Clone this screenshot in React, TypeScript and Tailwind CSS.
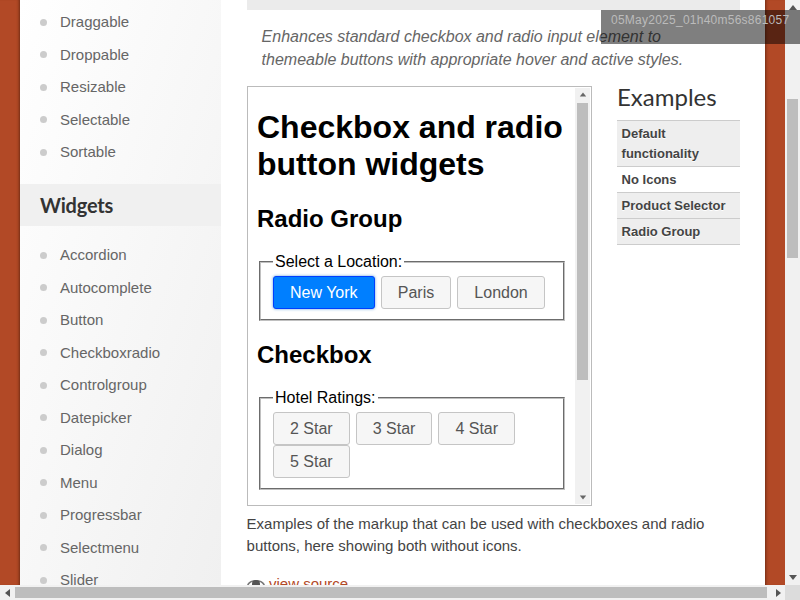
const interactions = ["Draggable", "Droppable", "Resizable", "Selectable", "Sortable"];
const widgets = [
  "Accordion",
  "Autocomplete",
  "Button",
  "Checkboxradio",
  "Controlgroup",
  "Datepicker",
  "Dialog",
  "Menu",
  "Progressbar",
  "Selectmenu",
  "Slider",
];
const examples = [
  { label: "Default functionality", shaded: true },
  { label: "No Icons", shaded: false },
  { label: "Product Selector", shaded: true },
  { label: "Radio Group", shaded: true },
];

function NavItem({ label }: { label: string }) {
  return (
    <li className="flex h-[32.5px] items-center pl-5 text-[15px] text-[#666]">
      <span className="mr-[13px] h-[7px] w-[7px] rounded-full bg-[#ccc]" />
      {label}
    </li>
  );
}

function Choice({ label, active }: { label: string; active?: boolean }) {
  return (
    <span
      className={
        active
          ? "inline-block rounded-[3px] border border-[#003eff] bg-[#007fff] px-4 py-[6px] text-base leading-[19px] text-white shadow-[0_0_3px_#5e9ed6]"
          : "inline-block rounded-[3px] border border-[#c5c5c5] bg-[#f6f6f6] px-4 py-[6px] text-base leading-[19px] text-[#555]"
      }
    >
      {label}
    </span>
  );
}

function Arrow({ dir, small }: { dir: "up" | "down" | "left" | "right"; small?: boolean }) {
  const points = {
    up: "1,7 9,7 5,2",
    down: "1,3 9,3 5,8",
    left: "7,1 7,9 2,5",
    right: "3,1 3,9 8,5",
  }[dir];
  return (
    <svg width="10" height="10" viewBox="0 0 10 10" className={small ? "h-[8px] w-[8px]" : ""}>
      <polygon points={points} fill={small ? "#666" : "#555"} />
    </svg>
  );
}

function EyeIcon() {
  return (
    <svg width="18" height="13" viewBox="0 0 18 13" className="shrink-0">
      <path d="M1 6.5C4 1.5 14 1.5 17 6.5C14 11.5 4 11.5 1 6.5Z" fill="none" stroke="#777" strokeWidth="1.5" />
      <circle cx="9" cy="6" r="4" fill="#555" />
    </svg>
  );
}

export default function App() {
  return (
    <div className="relative flex h-[600px] w-[800px] flex-col overflow-hidden bg-white font-['Liberation_Sans',Arial,sans-serif]">
      <div className="flex h-[585px]">
        <div className="w-[20px] bg-[#b24926] shadow-[inset_-3px_0_3px_-2px_#6e2c14]" />

        {/* sidebar */}
        <aside className="w-[201px] overflow-hidden bg-gradient-to-br from-white to-[#f0f0f0] pt-[6px]">
          <ul>
            {interactions.map((item) => (
              <NavItem key={item} label={item} />
            ))}
          </ul>
          <h2 className="mt-[15.5px] h-[42px] bg-[#f0f0f0] pl-5 font-['Lato',sans-serif] text-[20px] leading-[42px] font-bold tracking-[-0.2px] text-[#333]">
            Widgets
          </h2>
          <ul className="mt-[13px]">
            {widgets.map((item) => (
              <NavItem key={item} label={item} />
            ))}
          </ul>
        </aside>

        {/* content */}
        <main className="w-[544px] overflow-hidden pr-[25px] pl-[26px]">
          <div className="h-[10px] bg-[#ebebeb]" />
          <p className="mt-[15px] -ml-[0.4px] pl-[15px] text-base leading-[23px] text-[#666] italic">
            Enhances standard checkbox and radio input element to themeable buttons with appropriate hover and active
            styles.
          </p>
          <div className="mt-[15px] flex gap-[25px]">
            <div className="flex h-[420px] w-[345px] border border-[#bbb] bg-white p-px">
              <div className="min-w-0 flex-1 overflow-hidden pl-2 text-black">
                <h1 className="mt-[21px] text-[32px] leading-[37px] font-bold">Checkbox and radio button widgets</h1>
                <h2 className="mt-[22px] text-2xl leading-[28px] font-bold">Radio Group</h2>
                <fieldset className="mt-[20px] mr-[10px] ml-[2px] border-2 border-[#c0c0c0] [border-style:groove] px-[12px] pt-[5px] pb-[10px]">
                  <legend className="px-[2px] text-base leading-[18px]">Select a Location:</legend>
                  <div className="flex gap-[6.15px]">
                    <Choice label="New York" active />
                    <Choice label="Paris" />
                    <Choice label="London" />
                  </div>
                </fieldset>
                <h2 className="mt-[20px] text-2xl leading-[28px] font-bold">Checkbox</h2>
                <fieldset className="mt-[20px] mr-[10px] ml-[2px] border-2 border-[#c0c0c0] [border-style:groove] px-[12px] pt-[5px] pb-[10px]">
                  <legend className="px-[2px] text-base leading-[18px]">Hotel Ratings:</legend>
                  <div className="flex flex-wrap gap-x-[6px]">
                    <Choice label="2 Star" />
                    <Choice label="3 Star" />
                    <Choice label="4 Star" />
                    <Choice label="5 Star" />
                  </div>
                </fieldset>
              </div>
              <div className="flex w-[15px] flex-col items-center justify-between bg-[#f1f1f1]">
                <div className="flex w-full flex-col items-center">
                  <div className="mt-[3px] h-[10px]">
                    <Arrow dir="up" small />
                  </div>
                  <div className="mt-[2px] h-[277px] w-[11px] bg-[#bdbdbd]" />
                </div>
                <div className="mb-[1px] h-[10px]">
                  <Arrow dir="down" small />
                </div>
              </div>
            </div>
            <div className="w-[123px]">
              <h2 className="h-[34px] font-['Lato',sans-serif] text-[24px] leading-[22px] font-normal text-[#333]">
                Examples
              </h2>
              <ul className="border-t border-[#ccc] text-[13px] leading-[20px] font-bold text-[#444] [text-shadow:0_1px_0_#fff]">
                {examples.map((ex) => (
                  <li
                    key={ex.label}
                    className={
                      ex.shaded
                        ? "border-b border-[#ccc] bg-[#eee] px-[4.6px] pt-[3px] pb-[2px]"
                        : "border-b border-[#ccc] bg-white px-[4.6px] pt-[3px] pb-[2px]"
                    }
                  >
                    {ex.label}
                  </li>
                ))}
              </ul>
            </div>
          </div>
          <p className="mt-[7px] -ml-[0.4px] text-[15px] leading-[22px] text-[#444]">
            Examples of the markup that can be used with checkboxes and radio buttons, here showing both without icons.
          </p>
          <p className="mt-[16px] flex items-center gap-[4px] text-[15px] leading-[22px]">
            <EyeIcon />
            <span className="text-[#b24926] underline">view source</span>
          </p>
        </main>

        <div className="w-[20px] bg-[#b24926] shadow-[inset_3px_0_3px_-2px_#6e2c14]" />

        {/* page scrollbar */}
        <div className="flex w-[15px] flex-col items-center justify-between bg-[#f1f1f1]">
          <div className="flex w-full flex-col items-center">
            <div className="mt-[3px] h-[10px]">
              <Arrow dir="up" />
            </div>
            <div className="mt-[86px] h-[159px] w-[11px] bg-[#bdbdbd]" />
          </div>
          <div className="mb-[3px] h-[10px]">
            <Arrow dir="down" />
          </div>
        </div>
      </div>

      {/* horizontal scrollbar */}
      <div className="flex h-[15px] items-center bg-[#f1f1f1]">
        <div className="flex w-[15px] justify-center">
          <Arrow dir="left" />
        </div>
        <div className="h-[11px] w-[752px] bg-[#bdbdbd]" />
        <div className="flex w-[18px] justify-end pr-[2px]">
          <Arrow dir="right" />
        </div>
        <div className="h-[15px] flex-1 bg-[#dcdcdc]" />
      </div>

      {/* build stamp */}
      <div className="absolute top-[10px] right-0 h-[34px] w-[199px] bg-black/50 pt-[4px] pl-[10px] text-[12px] leading-[12px] tracking-[0.25px] whitespace-nowrap text-[#bbb]">
        05May2025_01h40m56s861057
      </div>
    </div>
  );
}
